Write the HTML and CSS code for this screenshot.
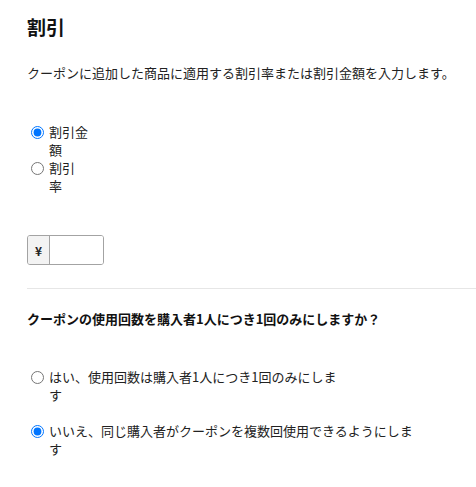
FILE: index.html
```html
<!DOCTYPE html>
<html lang="ja">
<head>
<meta charset="utf-8">
<link rel="stylesheet" href="styles.css">
</head>
<body>
<div class="page">
  <h1 class="title">割引</h1>
  <p class="desc">クーポンに追加した商品に適用する割引率または割引金額を入力します。</p>
  <div class="radio-group">
    <label class="option">
      <input type="radio" name="type" checked>
      <span class="opt-text w-amount">割引金額</span>
    </label>
    <label class="option">
      <input type="radio" name="type">
      <span class="opt-text w-rate">割引率</span>
    </label>
  </div>
  <div class="input-group">
    <span class="prefix">¥</span>
    <input class="field" type="text">
  </div>
  <hr class="divider">
  <p class="question">クーポンの使用回数を購入者1人につき1回のみにしますか？</p>
  <div class="radio-group usage">
    <label class="option">
      <input type="radio" name="usage">
      <span class="opt-text w-yes">はい、使用回数は購入者1人につき1回のみにします</span>
    </label>
    <label class="option">
      <input type="radio" name="usage" checked>
      <span class="opt-text w-no">いいえ、同じ購入者がクーポンを複数回使用できるようにします</span>
    </label>
  </div>
</div>
</body>
</html>
```
FILE: styles.css
```css
* { box-sizing: border-box; }
body {
  margin: 0;
  background: #fff;
  font-family: "Noto Sans CJK JP", "Noto Sans", sans-serif;
  color: #222;
}
.page {
  padding: 14px 0 0 27px;
}
.title {
  margin: 0;
  font-size: 19px;
  line-height: 25px;
  font-weight: 700;
  color: #111;
}
.desc {
  margin: 25px 0 0;
  font-size: 13px;
  line-height: 18px;
}
.radio-group {
  margin-top: 41px;
  display: flex;
  flex-direction: column;
}
.option {
  display: flex;
  align-items: flex-start;
  font-size: 13px;
  line-height: 18px;
}
.option input {
  width: 13px;
  height: 13px;
  margin: 3px 5px 0 4px;
  flex: none;
}
.opt-text { display: block; }
.w-amount { width: 45px; }
.w-rate { width: 32px; }
.w-yes { width: 292px; }
.w-no { width: 370px; }
.input-group {
  margin-top: 40px;
  display: flex;
  width: 77px;
  height: 30px;
  border: 1px solid #a3a3a3;
  border-radius: 3px;
  overflow: hidden;
}
.prefix {
  width: 22px;
  flex: none;
  display: flex;
  align-items: center;
  justify-content: center;
  background: #f3f3f3;
  border-right: 1px solid #a3a3a3;
  font-size: 12px;
  font-weight: 700;
  color: #222;
}
.field {
  flex: 1;
  min-width: 0;
  border: 0;
  margin: 0;
  padding: 0 6px;
  outline: none;
  background: #fff;
}
.divider {
  margin: 23px 0 0;
  border: 0;
  border-top: 1px solid #e6e6e6;
  height: 0;
}
.question {
  margin: 21px 0 0;
  font-size: 13px;
  line-height: 18px;
  font-weight: 700;
  color: #111;
}
.usage {
  margin-top: 40px;
  gap: 18px;
}
```
